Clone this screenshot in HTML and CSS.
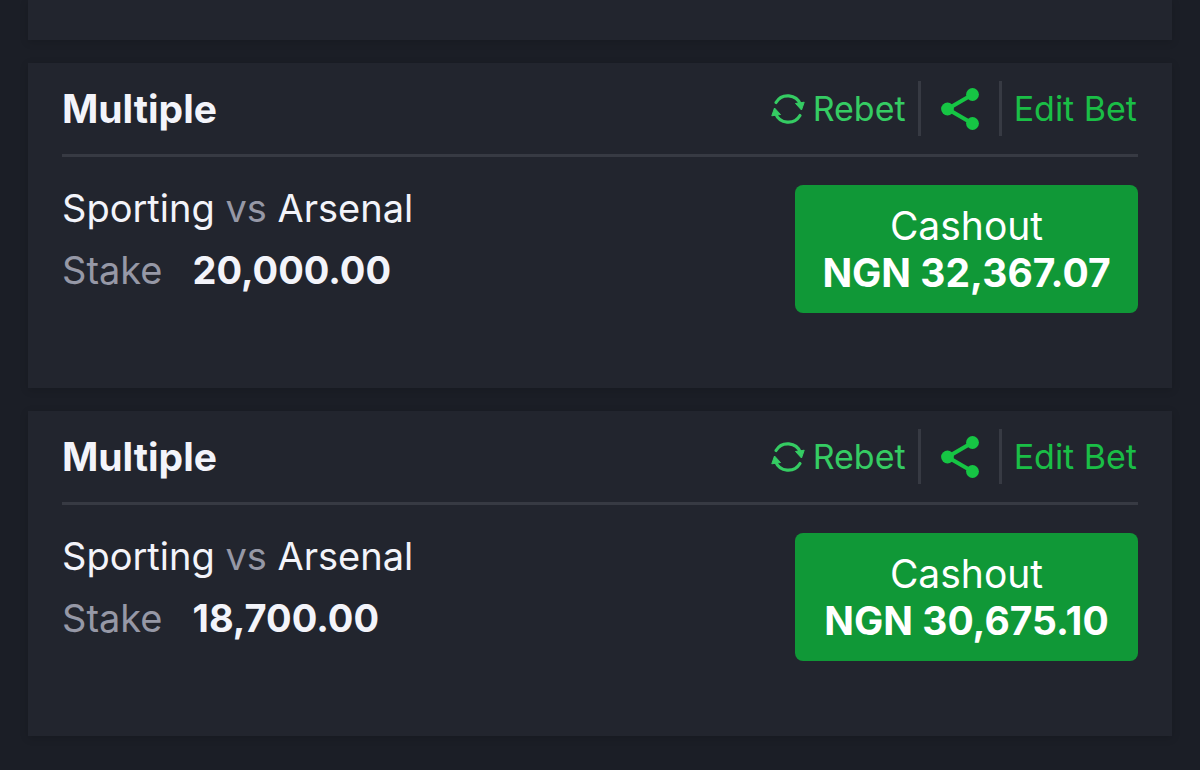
FILE: index.html
```html
<!doctype html>
<html lang="en">
    <head>
        <meta charset="UTF-8" />
        <meta name="viewport" content="width=device-width, initial-scale=1.0" />
        <title>Open Bets</title>
        <link rel="stylesheet" href="styles.css">
    </head>
    <body>
        <!-- shared icons -->
        <svg class="icon-defs" aria-hidden="true">
            <symbol id="icon-rebet" viewBox="0 0 34 34">
                <g fill="none" stroke="currentColor" stroke-width="3.200" stroke-linecap="round">
                    <path d="M5 10.500A13.700 13.700 0 0 1 29.500 12.500" />
                    <path d="M29 23.500A13.700 13.700 0 0 1 4.500 21.500" />
                </g>
                <g fill="currentColor" stroke="currentColor" stroke-linejoin="round">
                    <path d="M24.500 11.500L33.200 10.200L30.500 18Z" />
                    <path d="M9.500 22.500L0.800 23.800L3.500 16Z" />
                </g>
            </symbol>
            <symbol id="icon-share" viewBox="0 0 38 42">
                <path d="M31.500 6.500L6.500 21L31.500 35.500" fill="none" stroke="currentColor" stroke-width="4" />
                <g fill="currentColor">
                    <circle cx="31.500" cy="6.500" r="6.400" />
                    <circle cx="6.500" cy="21" r="6.400" />
                    <circle cx="31.500" cy="35.500" r="6.400" />
                </g>
            </symbol>
        </svg>

        <main class="bet-list">
            <div class="bet-card bet-card-end"></div>

            <article class="bet-card">
                <header class="bet-header">
                    <h2>Multiple</h2>
                    <div class="bet-actions">
                        <button type="button" class="action action-rebet">
                            <svg class="icon-rebet" aria-hidden="true"><use href="#icon-rebet" /></svg>
                            Rebet
                        </button>
                        <button type="button" class="action action-share" aria-label="Share">
                            <svg class="icon-share" aria-hidden="true"><use href="#icon-share" /></svg>
                        </button>
                        <button type="button" class="action action-edit">Edit Bet</button>
                    </div>
                </header>
                <div class="bet-body">
                    <div class="bet-info">
                        <p>Sporting <span class="muted">vs</span> Arsenal</p>
                        <p class="stake"><span class="muted">Stake</span> <strong>20,000.00</strong></p>
                    </div>
                    <button type="button" class="cashout">
                        <span>Cashout</span>
                        <strong>NGN 32,367.07</strong>
                    </button>
                </div>
            </article>

            <article class="bet-card">
                <header class="bet-header">
                    <h2>Multiple</h2>
                    <div class="bet-actions">
                        <button type="button" class="action action-rebet">
                            <svg class="icon-rebet" aria-hidden="true"><use href="#icon-rebet" /></svg>
                            Rebet
                        </button>
                        <button type="button" class="action action-share" aria-label="Share">
                            <svg class="icon-share" aria-hidden="true"><use href="#icon-share" /></svg>
                        </button>
                        <button type="button" class="action action-edit">Edit Bet</button>
                    </div>
                </header>
                <div class="bet-body">
                    <div class="bet-info">
                        <p>Sporting <span class="muted">vs</span> Arsenal</p>
                        <p class="stake"><span class="muted">Stake</span> <strong>18,700.00</strong></p>
                    </div>
                    <button type="button" class="cashout">
                        <span>Cashout</span>
                        <strong>NGN 30,675.10</strong>
                    </button>
                </div>
            </article>
        </main>
    </body>
</html>
```
FILE: styles.css
```css
* {
    margin: 0;
    padding: 0;
    box-sizing: border-box;
}

body {
    font-family: Inter, "Liberation Sans", sans-serif;
    font-size: 38px;
    color: #f3f4fa;
    background: #1b1e26;
    min-height: 100vh;
}

button {
    font: inherit;
    border: none;
    background: none;
    cursor: pointer;
}

.icon-defs {
    display: none;
}

.bet-list {
    display: flex;
    flex-direction: column;
    gap: 23px;
    padding: 0 28px 32px;
}

.bet-card {
    background: #22252e;
    padding: 18px 34px 75px;
    box-shadow: 0 2px 8px rgba(0, 0, 0, 0.15);
}

/* tail of the card that is scrolled off the top */
.bet-card-end {
    height: 40px;
    padding: 0;
}

.bet-header {
    display: flex;
    justify-content: space-between;
    align-items: center;
    padding-bottom: 18px;
    border-bottom: 3px solid #373a43;
}

.bet-header h2 {
    font-size: 39px;
    font-weight: 700;
    line-height: 48px;
}

.bet-actions {
    display: flex;
    align-items: center;
    padding-right: 1px;
}

.action {
    display: flex;
    align-items: center;
    height: 55px;
    font-size: 34px;
    color: #1abe46;
}

.action-rebet {
    gap: 8px;
    padding-right: 12px;
    color: #35cc63;
}

.action-share {
    padding: 0 20px;
    border-left: 3px solid #373a43;
    border-right: 3px solid #373a43;
    color: #16c544;
}

.action-edit {
    padding-left: 12px;
}

.icon-rebet {
    width: 34px;
    height: 34px;
}

.icon-share {
    width: 38px;
    height: 42px;
}

.bet-body {
    display: flex;
    justify-content: space-between;
    align-items: flex-start;
    padding-top: 28px;
}

.bet-info {
    display: flex;
    flex-direction: column;
    gap: 16px;
    line-height: 46px;
}

.stake {
    display: flex;
    gap: 30px;
}

.stake strong {
    font-weight: 700;
}

.muted {
    color: #9698a6;
}

.cashout {
    display: flex;
    flex-direction: column;
    align-items: center;
    min-width: 343px;
    padding: 17px 24px;
    border-radius: 8px;
    font-size: 39px;
    line-height: 47px;
    color: #ffffff;
    background: #109837;
}

.cashout strong {
    font-weight: 700;
}
```
